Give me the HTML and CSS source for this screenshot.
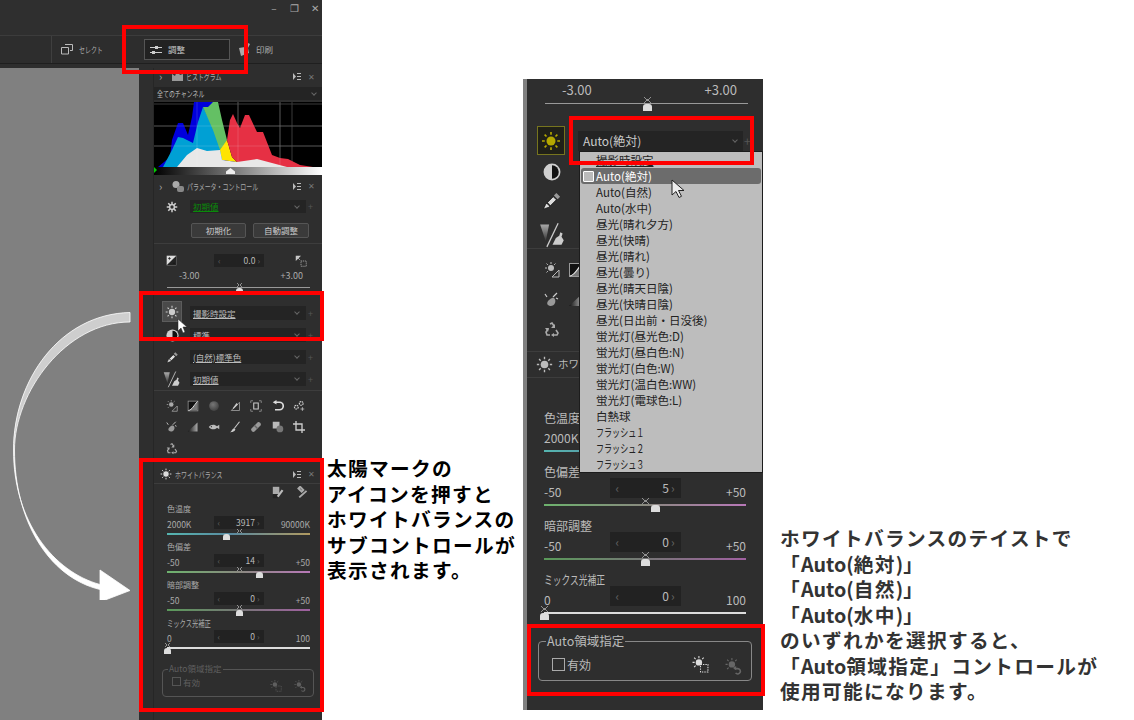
FILE: index.html
```html
<!DOCTYPE html>
<html lang="ja">
<head>
  <meta charset="UTF-8" />
  <title>ホワイトバランス</title>
  <link rel="stylesheet" href="styles.css">
</head>
<body>
<svg class="defs" aria-hidden="true">
  <symbol id="i-sun" viewBox="0 0 16 16"><circle cx="8" cy="8" r="3.6" fill="currentColor"/><path d="M8 .8v2.2M8 13v2.2M.8 8H3M13 8h2.2M2.9 2.9l1.5 1.5M11.6 11.6l1.5 1.5M2.9 13.1l1.5-1.5M11.6 4.4l1.5-1.5" stroke="currentColor" stroke-width="1.3" fill="none"/></symbol>
  <symbol id="i-half" viewBox="0 0 16 16"><circle cx="8" cy="8" r="7.500" fill="#cfcfcf"/><path d="M8 2a6 6 0 0 1 0 12z" fill="#111"/></symbol>
  <symbol id="i-pen" viewBox="0 0 16 16"><path d="M1 14.500l2-4 6-6 2.500 2.500-6 6z" fill="#ddd" stroke="#111" stroke-width=".6"/><path d="M9.500 3.500l2-2 3 3-2 2z" fill="#999"/><path d="M4 9.500l2.500 2.500" stroke="#222" stroke-width="1.200"/></symbol>
  <symbol id="i-tone" viewBox="0 0 24 24"><defs><linearGradient id="g-tone" x1="0" y1="0" x2="0" y2="1"><stop offset="0" stop-color="#aaa"/><stop offset="1" stop-color="#333"/></linearGradient></defs><path d="M1 3h8l-3 15z" fill="url(#g-tone)"/><path d="M7 23L17 2" stroke="#ccc" stroke-width="1.100"/><path d="M12 21l3-6 3-2 1-3 2 1-1 3 2 3-2 4z" fill="#ccc"/></symbol>
  <symbol id="i-gear" viewBox="0 0 16 16"><circle cx="8" cy="8" r="3.200" fill="none" stroke="currentColor" stroke-width="2"/><path d="M8 1v3M8 12v3M1 8h3M12 8h3M3 3l2.200 2.200M10.800 10.800L13 13M3 13l2.200-2.200M10.800 5.200L13 3" stroke="currentColor" stroke-width="2"/></symbol>
  <symbol id="i-exp" viewBox="0 0 16 16"><rect x="1" y="1" width="14" height="14" fill="#ddd"/><path d="M15 1L1 15h14z" fill="#222"/><path d="M3 5h4M5 3v4M10 12h3" stroke="#111" stroke-width="1"/></symbol>
  <symbol id="i-auto" viewBox="0 0 16 16"><path d="M1 1h7L1 8z" fill="#ccc"/><rect x="8" y="8" width="7" height="7" fill="none" stroke="#bbb" stroke-dasharray="1.500 1"/><path d="M2 2l5 5" stroke="#bbb"/></symbol>
  <symbol id="i-sunbox" viewBox="0 0 16 16"><circle cx="7" cy="6" r="3" fill="currentColor"/><path d="M7 0v2M1 6h2M2.500 1.500l1.400 1.400M2.500 10.500l1.400-1.400M11.500 1.500l-1.400 1.400" stroke="currentColor"/><path d="M15 8v7H8z" fill="none" stroke="currentColor"/></symbol>
  <symbol id="i-curve" viewBox="0 0 16 16"><rect x="1.500" y="1.500" width="13" height="13" fill="#111" stroke="#999"/><path d="M2 14C7 13 9 7 14 2v12z" fill="#777"/><path d="M2 14C7 13 9 7 14 2" fill="none" stroke="#eee" stroke-width="1.200"/></symbol>
  <symbol id="i-ball" viewBox="0 0 16 16"><defs><radialGradient id="g-ball" cx=".4" cy=".35" r=".7"><stop offset="0" stop-color="#777"/><stop offset="1" stop-color="#3f3f3f"/></radialGradient></defs><circle cx="8" cy="8" r="6.500" fill="url(#g-ball)"/></symbol>
  <symbol id="i-dtri" viewBox="0 0 16 16"><path d="M14 14H3L14 3z" fill="none" stroke="#aaa"/><path d="M5 11l5-7 2 2-6 6z" fill="#ccc"/></symbol>
  <symbol id="i-brk" viewBox="0 0 16 16"><path d="M1 4V1h3M12 1h3v3M15 12v3h-3M4 15H1v-3" stroke="#999" fill="none"/><path d="M5 4h6v8H5z" fill="none" stroke="#ccc" stroke-width="1.400"/></symbol>
  <symbol id="i-undo" viewBox="0 0 16 16"><path d="M5 3h5a4.500 4.500 0 0 1 0 10H4" fill="none" stroke="#ddd" stroke-width="2.200"/><path d="M6 0v6L1 3z" fill="#ddd"/></symbol>
  <symbol id="i-gears" viewBox="0 0 16 16"><circle cx="11" cy="4.500" r="2.500" fill="none" stroke="#ccc" stroke-width="1.600" stroke-dasharray="2 .8"/><circle cx="4.500" cy="9.500" r="2.500" fill="none" stroke="#ccc" stroke-width="1.600" stroke-dasharray="2 .8"/><path d="M10 12h5M12.500 9.500v5" stroke="#ccc"/></symbol>
  <symbol id="i-pear" viewBox="0 0 16 16"><path d="M8 6c3-1 4 3 3 5-1 3-5 4-7 2-2-2 0-5 4-7z" fill="#999"/><path d="M9 5l4-4M1 2l2 3M14 7l-2-1" stroke="#ccc" stroke-width="1.200"/></symbol>
  <symbol id="i-grad" viewBox="0 0 16 16"><defs><linearGradient id="g-grad"><stop offset="0" stop-color="#111"/><stop offset="1" stop-color="#aaa"/></linearGradient></defs><path d="M1 14L14 2v12z" fill="url(#g-grad)"/></symbol>
  <symbol id="i-fish" viewBox="0 0 16 16"><path d="M1 8c3-4 8-4 11-1l3-2v6l-3-2C9 12 4 12 1 8z" fill="#bbb"/><circle cx="4.500" cy="7.500" r=".8" fill="#222"/></symbol>
  <symbol id="i-brush" viewBox="0 0 16 16"><path d="M14 1L7 10" stroke="#ccc" stroke-width="1.400"/><path d="M6.500 9.500l2 1.500C8 14 4 15 1.500 15c2-1 2-4 5-5.500z" fill="#ccc"/></symbol>
  <symbol id="i-band" viewBox="0 0 16 16"><path d="M2 10l8-8c2-2 6 2 4 4l-8 8c-2 2-6-2-4-4z" fill="#999"/><path d="M6 6l4 4" stroke="#666" stroke-width="2"/></symbol>
  <symbol id="i-chips" viewBox="0 0 16 16"><rect x="1" y="1" width="9" height="9" fill="#bbb"/><circle cx="10.500" cy="10.500" r="4.500" fill="#777"/></symbol>
  <symbol id="i-crop" viewBox="0 0 16 16"><path d="M4 0v12h12M0 4h12v12" fill="none" stroke="#ccc" stroke-width="1.800"/></symbol>
  <symbol id="i-cycle" viewBox="0 0 16 16"><path d="M6 2l2-1 2 3-1 1M4 7L2 10l1 3h3M12 8l2 3-1 2h-3" fill="none" stroke="#aaa" stroke-width="1.600"/><path d="M11 2v4H7zM1 6l4 0-1 4zM10 11v4l-3-2z" fill="#aaa"/></symbol>
  <symbol id="i-drop1" viewBox="0 0 16 16"><rect x="1" y="1" width="8" height="9" fill="#aaa"/><rect x="1" y="10" width="6" height="5" fill="#222"/><path d="M7 13l6-8" stroke="#bbb" stroke-width="2.600"/></symbol>
  <symbol id="i-drop2" viewBox="0 0 16 16"><path d="M5 1l4 4-2 2-4-4zM4 14l9-8" stroke="#aaa" stroke-width="2.400" fill="none"/></symbol>
  <symbol id="i-area" viewBox="0 0 16 16"><circle cx="6.500" cy="6" r="3" fill="currentColor"/><path d="M6.500 0v2M.5 6h2M2 1.500l1.400 1.400M2 10.500l1.400-1.400M11 1.500l-1.400 1.400" stroke="currentColor"/><rect x="8" y="8" width="7" height="7" fill="none" stroke="currentColor" stroke-dasharray="1.300 1"/></symbol>
  <symbol id="i-areaback" viewBox="0 0 16 16"><circle cx="6.500" cy="6" r="3" fill="currentColor"/><path d="M6.500 0v2M.5 6h2M2 1.500l1.400 1.400M2 10.500l1.400-1.400M11 1.500l-1.400 1.400" stroke="currentColor"/><path d="M9 10h3a2.500 2.500 0 1 1-2 4" fill="none" stroke="currentColor" stroke-width="1.500"/><path d="M10.500 7.500v4L7.500 9.500z" fill="currentColor"/></symbol>
  <symbol id="i-menu" viewBox="0 0 8 7"><path d="M0 0v7l3-3.500z" fill="currentColor"/><path d="M4 .5h4M4 3.500h4M4 6.500h4" stroke="currentColor"/></symbol>
</svg>

<div class="slide">

  <!-- left screenshot -->
  <section class="shot-left">
    <div class="win-bar">
      <span class="win-btn">–</span>
      <span class="win-btn">❐</span>
      <span class="win-btn">✕</span>
    </div>
    <div class="tool-bar">
      <div class="tool-first"></div>
      <div class="tool-item select-item">
        <svg width="12" height="11" viewBox="0 0 12 11"><path d="M4 .5h7.500v6H9M.5 3.500h7v6.500h-7z" fill="none" stroke="#bbb"/></svg>
        <span class="tight">セレクト</span>
      </div>
      <div class="tool-item active-item">
        <svg width="12" height="8" viewBox="0 0 12 8"><path d="M0 1.500h5M8 1.500h4M0 6.500h2M5 6.500h7" stroke="#ccc"/><rect x="5" y="0" width="3" height="3" fill="#ccc"/><rect x="2" y="5" width="3" height="3" fill="#ccc"/></svg>
        <span>調整</span>
      </div>
      <div class="tool-item print-item">
        <svg width="11" height="13" viewBox="0 0 11 13"><path d="M0 5l6-1 3-4 2 1-2 4 1 5-8 3z" fill="#aaa"/></svg>
        <span>印刷</span>
      </div>
    </div>
    <div class="work">
      <div class="canvas"></div>
      <div class="sidebar">
        <div class="side-body">

          <div class="head">
            <span class="chev">›</span>
            <svg class="head-icon" width="11" height="11" viewBox="0 0 11 11"><path d="M0 10V3l3 2 2-5 3 4 3-1v7z" fill="#999"/></svg>
            <span class="head-title tight">ヒストグラム</span>
            <svg class="head-menu" width="8" height="7"><use href="#i-menu"/></svg>
            <span class="head-close">✕</span>
          </div>
          <div class="channel"><span class="tight">全てのチャンネル</span><i class="drop-arrow"></i></div>

          <svg class="hist" width="168" height="65" viewBox="154 102 168 65">
            <rect x="154" y="102" width="168" height="65" fill="#000"/>
            <path d="M154 104h168M154 126h168M154 146h168M197 102v65M238 102v65M280 102v65M292 102v65" stroke="#3a3a3a"/>
            <path d="M158 167L170 157L172 140L178 123L183 123L188 135L192 117L194 102H213L225 150V167Z" fill="#0000dc"/>
            <path d="M163 167L172 150L178 137L183 138L193 143L198 122L203 107L213 127L222 148L225 167Z" fill="#00a0d4"/>
            <path d="M203 107L208 107L213 102L218 102L222 120L227 140L223 150L220 150L213 130Z" fill="#64c064"/>
            <path d="M220 150L227 140L232 157L237 162L222 160Z" fill="#ffe400"/>
            <path d="M227 140L230 120L233 114L237 123L240 128L245 115L249 115L257 132L263 132L272 155L280 158L288 159L300 165L313 167H233L237 162L232 157Z" fill="#e63044"/>
            <path d="M177 167L187 155L197 148L207 151L220 150L222 160L237 162L257 159L272 163L287 167Z" fill="#e8e8e8"/>
            <path d="M154 126h168M154 146h168M197 102v65M238 102v65M280 102v65" stroke="#fff" stroke-opacity=".14"/>
          </svg>
          <div class="hist-bar">
            <span class="hist-black"></span>
            <span class="hist-mid"></span>
          </div>

          <div class="head head-param">
            <span class="chev">›</span>
            <svg class="head-icon" width="12" height="11" viewBox="0 0 12 11"><circle cx="4" cy="3.500" r="3.500" fill="#aaa"/><rect x="5" y="5" width="7" height="6" rx="2" fill="#888"/></svg>
            <span class="head-title tight">パラメータ・コントロール</span>
            <svg class="head-menu" width="8" height="7"><use href="#i-menu"/></svg>
            <span class="head-close">✕</span>
          </div>

          <div class="ctl-row gear-row">
            <span class="ctl-icon"><svg width="12" height="12"><use href="#i-gear"/></svg></span>
            <div class="drop"><span class="green">初期値</span><i class="drop-arrow"></i></div>
            <span class="plus">+</span>
          </div>

          <div class="btn-row">
            <button class="btn">初期化</button>
            <button class="btn">自動調整</button>
          </div>
          <div class="rule rule-btn"></div>

          <div class="exp-row">
            <svg width="11" height="11"><use href="#i-exp"/></svg>
            <span class="num"><i>‹</i><b>0.0</b><i>›</i></span>
            <svg width="12" height="12"><use href="#i-auto"/></svg>
          </div>
          <div class="exp-labels"><span>-3.00</span><span>+3.00</span></div>
          <div class="track exp-track"><span class="mark-x"></span><span class="thumb" style="left:50%"></span></div>

          <div class="ctl-row sun-row">
            <span class="ctl-icon"><span class="sun-btn"><svg width="14" height="14"><use href="#i-sun"/></svg></span></span>
            <div class="drop"><span class="ul">撮影時設定</span><i class="drop-arrow"></i></div>
            <span class="plus">+</span>
          </div>
          <div class="ctl-row">
            <span class="ctl-icon"><svg width="13" height="13"><use href="#i-half"/></svg></span>
            <div class="drop"><span class="ul">標準</span><i class="drop-arrow"></i></div>
            <span class="plus">+</span>
          </div>
          <div class="ctl-row">
            <span class="ctl-icon"><svg width="13" height="13"><use href="#i-pen"/></svg></span>
            <div class="drop"><span class="ul">(自然)標準色</span><i class="drop-arrow"></i></div>
            <span class="plus">+</span>
          </div>
          <div class="ctl-row">
            <span class="ctl-icon"><svg width="18" height="18"><use href="#i-tone"/></svg></span>
            <div class="drop"><span class="ul">初期値</span><i class="drop-arrow"></i></div>
            <span class="plus">+</span>
          </div>
          <div class="rule rule-icons"></div>

          <div class="icon-grid">
            <svg><use href="#i-sunbox"/></svg>
            <svg><use href="#i-curve"/></svg>
            <svg><use href="#i-ball"/></svg>
            <svg><use href="#i-dtri"/></svg>
            <svg><use href="#i-brk"/></svg>
            <svg><use href="#i-undo"/></svg>
            <svg><use href="#i-gears"/></svg>
            <svg><use href="#i-pear"/></svg>
            <svg><use href="#i-grad"/></svg>
            <svg><use href="#i-fish"/></svg>
            <svg><use href="#i-brush"/></svg>
            <svg><use href="#i-band"/></svg>
            <svg><use href="#i-chips"/></svg>
            <svg><use href="#i-crop"/></svg>
            <svg><use href="#i-cycle"/></svg>
          </div>

          <div class="head head-wb">
            <svg class="head-sun" width="12" height="12"><use href="#i-sun"/></svg>
            <span class="head-title tight">ホワイトバランス</span>
            <svg class="head-menu" width="8" height="7"><use href="#i-menu"/></svg>
            <span class="head-close">✕</span>
          </div>
          <div class="wb-tools">
            <svg width="13" height="13"><use href="#i-drop1"/></svg>
            <svg width="13" height="13"><use href="#i-drop2"/></svg>
          </div>

          <div class="sliders small">
            <div class="slider">
              <div class="slider-name">色温度</div>
              <div class="slider-row"><span>2000K</span><span class="num"><i>‹</i><b>3917</b><i>›</i></span><span class="end">90000K</span></div>
              <div class="track temp"><span class="mark-x"></span><span class="thumb" style="left:41%"></span></div>
            </div>
            <div class="slider">
              <div class="slider-name">色偏差</div>
              <div class="slider-row"><span>-50</span><span class="num"><i>‹</i><b>14</b><i>›</i></span><span class="end">+50</span></div>
              <div class="track tint"><span class="mark-x"></span><span class="thumb" style="left:64%"></span></div>
            </div>
            <div class="slider">
              <div class="slider-name">暗部調整</div>
              <div class="slider-row"><span>-50</span><span class="num"><i>‹</i><b>0</b><i>›</i></span><span class="end">+50</span></div>
              <div class="track dark"><span class="mark-x"></span><span class="thumb" style="left:50%"></span></div>
            </div>
            <div class="slider">
              <div class="slider-name tight">ミックス光補正</div>
              <div class="slider-row"><span>0</span><span class="num"><i>‹</i><b>0</b><i>›</i></span><span class="end">100</span></div>
              <div class="track mix"><span class="mark-x mark-start"></span><span class="thumb" style="left:0"></span></div>
            </div>
          </div>

          <div class="area-group small-area">
            <span class="area-legend">Auto領域指定</span>
            <span class="check"></span>
            <span class="check-text">有効</span>
            <svg class="area-a" width="12" height="12"><use href="#i-area"/></svg>
            <svg class="area-b" width="12" height="12"><use href="#i-areaback"/></svg>
          </div>

        </div>
      </div>
    </div>

    <svg class="swoosh" width="140" height="300" viewBox="0 300 140 300">
      <defs>
        <linearGradient id="g-swoosh" x1="0" y1="0" x2="0" y2="1">
          <stop offset="0" stop-color="#cecece"/>
          <stop offset=".47" stop-color="#cecece"/>
          <stop offset=".55" stop-color="#fff"/>
        </linearGradient>
      </defs>
      <path d="M130 312.500C60 314 13.500 380 13.500 450C13.500 522 54 572 100 584.500L100 570L130 590.500L100 602L100 589.500C48 577 14.500 520 14.500 450C14.500 392 66 322 130 322Z" fill="url(#g-swoosh)" stroke="#fff" stroke-width=".8"/>
    </svg>
    <svg class="cursor-a" width="10" height="15" viewBox="0 0 10 15"><path d="M1 0v12l3-3 2 5 2-1-2-5h4z" fill="#fff" stroke="#222" stroke-width=".5"/></svg>
  </section>

  <p class="note note-left">太陽マークの<br>アイコンを押すと<br>ホワイトバランスの<br>サブコントロールが<br>表示されます。</p>

  <!-- right screenshot -->
  <section class="shot-right">
    <div class="exp-labels big-labels"><span>-3.00</span><span>+3.00</span></div>
    <div class="track big-track"><span class="mark-x"></span><span class="thumb" style="left:50%"></span></div>

    <div class="big-sun-row">
      <span class="big-sun"><svg width="20" height="20"><use href="#i-sun"/></svg></span>
      <div class="drop big-drop"><span>Auto(絶対)</span><i class="drop-arrow"></i></div>
      <span class="plus">+</span>
    </div>

    <span class="big-icon half-icon"><svg width="18" height="18"><use href="#i-half"/></svg></span>
    <span class="big-icon pen-icon"><svg width="20" height="20"><use href="#i-pen"/></svg></span>
    <span class="big-icon tone-icon"><svg width="27" height="27"><use href="#i-tone"/></svg></span>
    <div class="rule"></div>

    <div class="big-grid">
      <svg><use href="#i-sunbox"/></svg>
      <svg><use href="#i-curve"/></svg>
      <svg><use href="#i-pear"/></svg>
      <svg><use href="#i-grad"/></svg>
      <svg><use href="#i-cycle"/></svg>
    </div>
    <div class="rule big-grid-end"></div>

    <div class="big-head">
      <svg width="17" height="17"><use href="#i-sun"/></svg>
      <span>ホワ</span>
    </div>

    <div class="sliders big">
      <div class="slider">
        <div class="slider-name">色温度</div>
        <div class="slider-row"><span>2000K</span></div>
        <div class="track temp"></div>
      </div>
      <div class="slider">
        <div class="slider-name">色偏差</div>
        <div class="slider-row"><span>-50</span><span class="num"><i>‹</i><b>5</b><i>›</i></span><span class="end">+50</span></div>
        <div class="track tint"><span class="mark-x"></span><span class="thumb" style="left:55%"></span></div>
      </div>
      <div class="slider">
        <div class="slider-name">暗部調整</div>
        <div class="slider-row"><span>-50</span><span class="num"><i>‹</i><b>0</b><i>›</i></span><span class="end">+50</span></div>
        <div class="track dark"><span class="mark-x"></span><span class="thumb" style="left:50%"></span></div>
      </div>
      <div class="slider">
        <div class="slider-name tight">ミックス光補正</div>
        <div class="slider-row"><span>0</span><span class="num"><i>‹</i><b>0</b><i>›</i></span><span class="end">100</span></div>
        <div class="track mix"><span class="mark-x mark-start"></span><span class="thumb" style="left:0"></span></div>
      </div>
    </div>

    <div class="area-group big-area">
      <span class="area-legend">Auto領域指定</span>
      <span class="check"></span>
      <span class="check-text">有効</span>
      <svg class="area-a" width="17" height="17"><use href="#i-area"/></svg>
      <svg class="area-b" width="17" height="17"><use href="#i-areaback"/></svg>
    </div>

    <ul class="popup">
      <li class="ul">撮影時設定</li>
      <li class="sel">Auto(絶対)</li>
      <li>Auto(自然)</li>
      <li>Auto(水中)</li>
      <li>昼光(晴れ夕方)</li>
      <li>昼光(快晴)</li>
      <li>昼光(晴れ)</li>
      <li>昼光(曇り)</li>
      <li>昼光(晴天日陰)</li>
      <li>昼光(快晴日陰)</li>
      <li>昼光(日出前・日没後)</li>
      <li>蛍光灯(昼光色:D)</li>
      <li>蛍光灯(昼白色:N)</li>
      <li>蛍光灯(白色:W)</li>
      <li>蛍光灯(温白色:WW)</li>
      <li>蛍光灯(電球色:L)</li>
      <li>白熱球</li>
      <li><span class="tight">フラッシュ１</span></li>
      <li><span class="tight">フラッシュ２</span></li>
      <li><span class="tight">フラッシュ３</span></li>
    </ul>
    <svg class="cursor-b" width="14" height="20" viewBox="0 0 14 20"><path d="M1 1v15l4-3.500 3 6 2.500-1.200-3-5.800H13z" fill="#eee" stroke="#222"/></svg>
  </section>

  <p class="note note-right">ホワイトバランスのテイストで<br>「<span class="latin">Auto(</span>絶対<span class="latin">)</span>」<br>「<span class="latin">Auto(</span>自然<span class="latin">)</span>」<br>「<span class="latin">Auto(</span>水中<span class="latin">)</span>」<br>のいずれかを選択すると、<br>「<span class="latin">Auto</span>領域指定」コントロールが<br>使用可能になります。</p>

  <!-- red call-outs -->
  <div class="frame frame-tool"></div>
  <div class="frame frame-sun"></div>
  <div class="frame frame-wb"></div>
  <div class="frame frame-drop"></div>
  <div class="frame frame-area"></div>
</div>
</body>
</html>
```

FILE: styles.css
```css
* {
  box-sizing: border-box;
}

body {
  margin: 0;
  background: #fff;
  font-family: "Noto Sans CJK JP", "Noto Sans", sans-serif;
}

.defs {
  width: 0;
  height: 0;
  position: absolute;
}

.slide {
  position: relative;
  width: 1134px;
  height: 720px;
  overflow: hidden;
}

/* the app's kana is much narrower than Noto's */
.tight {
  display: block;
  width: max-content;
  transform: scaleX(.7);
  transform-origin: left center;
}

/* left screenshot */
.shot-left {
  position: absolute;
  left: 0;
  top: 0;
  width: 322px;
  height: 720px;
  background: #2e2e2e;
  color: #aaa;
  font-size: 8.500px;
  line-height: 1;
}

.win-bar {
  height: 35px;
  display: flex;
  justify-content: flex-end;
  padding-top: 3px;
  gap: 6.500px;
  background: #2f2f2f;
}

.win-btn {
  width: 14px;
  font-size: 10px;
  text-align: center;
  color: #aaa;
}

.tool-bar {
  height: 29px;
  display: flex;
  align-items: center;
  background: #2d2d2d;
  border-top: 1px solid #3c3c3c;
  border-bottom: 1px solid #1f1f1f;
}

.tool-first {
  width: 52px;
  height: 100%;
  border-right: 1px solid #3f3f3f;
}

.tool-item {
  display: flex;
  align-items: center;
  color: #aaa;
}

.select-item {
  margin-left: 9px;
  gap: 6px;
  width: 83px;
}

.active-item {
  width: 86px;
  height: 21px;
  gap: 6px;
  padding-left: 5px;
  background: #222;
  border: 1px solid #555;
  color: #ccc;
}

.print-item {
  margin-left: 9px;
  gap: 6px;
}

.work {
  display: flex;
  height: 656px;
  padding-top: 4px;
}

.canvas {
  width: 139px;
  background: #808080;
}

.sidebar {
  width: 183px;
  padding-left: 14px;
}

.side-body {
  height: 100%;
  border-left: 1px solid #262626;
}

.head {
  height: 17px;
  display: flex;
  align-items: center;
  padding-right: 4px;
  color: #aaa;
}

.chev {
  width: 18px;
  padding-left: 5px;
  font-size: 11px;
}

.head-title {
  margin-left: 3px;
}

.head-menu {
  margin-left: auto;
  color: #bbb;
}

.head-close {
  width: 14px;
  margin-left: 3px;
  font-size: 8px;
  text-align: center;
  color: #777;
}

.channel {
  height: 13px;
  margin-top: 2px;
  display: flex;
  align-items: center;
  padding: 0 6px 0 3px;
  background: #242424;
  color: #bbb;
}

.drop-arrow {
  margin-left: auto;
  width: 4px;
  height: 4px;
  border-right: 1px solid #666;
  border-bottom: 1px solid #666;
  transform: rotate(45deg);
  margin-top: -2px;
}

.hist {
  display: block;
  margin-top: 2px;
}

.hist-bar {
  position: relative;
  height: 8px;
  background: linear-gradient(90deg, #000, #fff);
}

.hist-black {
  position: absolute;
  left: 0;
  top: 0;
  border-left: 3px solid #0c0;
  border-top: 3px solid transparent;
  border-bottom: 3px solid transparent;
}

.hist-mid {
  position: absolute;
  left: 72px;
  top: 1px;
  width: 9px;
  height: 6px;
  background: #eee;
  clip-path: polygon(50% 0, 100% 60%, 100% 100%, 0 100%, 0 60%);
}

.head-param {
  height: 16px;
  margin-top: 3px;
}

.ctl-row {
  height: 14px;
  margin-top: 8px;
  display: flex;
  align-items: center;
}

.ctl-icon {
  width: 36px;
  display: flex;
  justify-content: center;
  color: #ccc;
}

.drop {
  width: 116px;
  height: 100%;
  display: flex;
  align-items: center;
  padding: 0 7px 0 3px;
  background: #242424;
  color: #bbb;
}

.green {
  color: #0a8a0a;
  text-decoration: underline;
}

.ul {
  text-decoration: underline;
}

.plus {
  margin-left: 2px;
  color: #555;
  font-size: 9px;
}

.gear-row {
  height: 13px;
  margin-top: 6px;
}

.btn-row {
  margin: 10px 0 0 37px;
  display: flex;
  gap: 7px;
}

.btn {
  width: 55px;
  height: 15px;
  padding: 0;
  font: inherit;
  color: #ccc;
  background: #3a3a3a;
  border: 1px solid #555;
  border-radius: 2px;
}

.btn + .btn {
  width: 56px;
}

.rule {
  height: 1px;
  background: #3d3d3d;
}

.rule-btn {
  margin-top: 5px;
}

.exp-row {
  margin-top: 10px;
  height: 13px;
  display: flex;
  align-items: center;
  padding-left: 12px;
}

.exp-row .num {
  width: 50px;
  margin-left: 37px;
  margin-right: 31px;
}

.num {
  height: 13px;
  display: flex;
  align-items: center;
  padding: 0 4px;
  background: #222;
  color: #bbb;
}

.num i {
  font-style: normal;
  color: #666;
}

.num b {
  margin-left: auto;
  margin-right: 2px;
  font-weight: normal;
}

.exp-labels {
  width: 124px;
  height: 11px;
  margin: 4px 0 0 25px;
  display: flex;
  justify-content: space-between;
  font-size: 9px;
}

.track {
  position: relative;
  height: 1px;
  background: #999;
}

.exp-track {
  width: 143px;
  margin: 5px 0 0 13px;
}

/* small x above the track: the neutral position */
.mark-x {
  position: absolute;
  left: 50%;
  top: -4px;
  width: 5px;
  height: 4px;
  margin-left: -2px;
  opacity: .8;
  background:
    linear-gradient(38deg, transparent 45%, #aaa 45% 55%, transparent 55%),
    linear-gradient(-38deg, transparent 45%, #aaa 45% 55%, transparent 55%);
}

.mark-start {
  left: 0;
}

.thumb {
  position: absolute;
  top: 1px;
  width: 7px;
  height: 6px;
  margin-left: -3px;
  background: #ddd;
  border-radius: 3px 3px 0 0;
}

.sun-row {
  margin-top: 18px;
}

.sun-btn {
  width: 20px;
  height: 21px;
  margin-top: -3px;
  display: flex;
  align-items: center;
  justify-content: center;
  background: #4a4a4a;
  border: 1px solid #5c5c5c;
}

.rule-icons {
  margin-top: 4px;
}

.icon-grid {
  margin: 4px 0 0 7px;
  display: grid;
  grid-template-columns: repeat(7, 21.200px);
  grid-auto-rows: 21.500px;
  place-items: center;
}

.icon-grid svg {
  width: 12px;
  height: 12px;
}

.head-wb {
  margin-top: 6px;
  height: 18px;
  border-bottom: 1px solid #3d3d3d;
  padding-left: 6px;
}

.head-sun {
  color: #ddd;
}

.wb-tools {
  height: 12px;
  margin: 3px 0 0;
  padding-right: 13px;
  display: flex;
  justify-content: flex-end;
  align-items: center;
  gap: 11px;
}

.small {
  width: 143px;
  margin: 6px 0 0 13px;
}

.slider-row {
  display: grid;
  grid-template-columns: 1fr 50px 1fr;
}

.slider-row > span:not(.num) {
  padding-top: 4px;
}

.end {
  text-align: right;
}

.slider-name {
  height: 11px;
  font-size: 8px;
}

.small .slider-name.tight {
  font-size: 9px;
}

.small .slider {
  height: 38px;
}

.small .track {
  margin-top: 4px;
}

.temp {
  height: 2px;
  background: linear-gradient(90deg, #55b5b0, #5a8aa0 45%, #b09a60);
}

.tint {
  height: 2px;
  background: linear-gradient(90deg, #6db26d, #8a8a80 50%, #b878b8);
}

.dark {
  height: 2px;
  background: linear-gradient(90deg, #5a9a5a, #777 50%, #a060a0);
}

.mix {
  height: 2px;
  background: #ddd;
}

.area-group {
  position: relative;
  border: 1px solid #555;
  border-radius: 4px;
}

.small-area {
  width: 152px;
  height: 28px;
  margin: 12px 0 0 8px;
  color: #5f5f5f;
}

.area-legend {
  position: absolute;
  left: 5px;
  top: -6px;
  padding: 0 1px;
  background: #2e2e2e;
}

.check {
  position: absolute;
  left: 9px;
  top: 7px;
  width: 9px;
  height: 9px;
  border: 1px solid #555;
}

.check-text {
  position: absolute;
  left: 20px;
  top: 8px;
}

.area-a {
  position: absolute;
  left: 107px;
  top: 10px;
}

.area-b {
  position: absolute;
  left: 131px;
  top: 10px;
}

.swoosh {
  position: absolute;
  left: 0;
  top: 300px;
}

.cursor-a {
  position: absolute;
  left: 177px;
  top: 319px;
}

/* right screenshot */
.shot-right {
  position: absolute;
  left: 523px;
  top: 79px;
  width: 240px;
  height: 631px;
  background: #2e2e2e;
  border-left: 4px solid #808080;
  color: #bbb;
  font-size: 12px;
  line-height: 1;
}

.big-labels {
  width: 175px;
  height: 14px;
  margin: 4px 0 0 35px;
  font-size: 13px;
}

.big-track {
  width: 203px;
  margin: 6px 0 0 18px;
}

.big-track .mark-x,
.big .mark-x {
  width: 7px;
  height: 6px;
  margin-left: -3px;
  top: -6px;
}

.big .thumb,
.big-track .thumb {
  width: 9px;
  height: 7px;
  margin-left: -4px;
}

.big-sun-row {
  height: 29px;
  margin: 22px 0 0 10px;
  display: flex;
  align-items: center;
}

.big-sun {
  width: 28px;
  height: 29px;
  display: flex;
  align-items: center;
  justify-content: center;
  background: #202018;
  border: 1px solid #77751e;
  color: #b5a800;
}

.big-drop {
  width: 165px;
  height: 20px;
  margin: 0 0 0 13px;
  padding: 0 6px 0 5px;
  background: #242424;
  font-size: 12px;
  color: #ccc;
}

.big-sun-row .plus {
  margin-left: 1px;
  font-size: 12px;
}

.big-icon {
  display: flex;
  width: 50px;
  justify-content: center;
}

.half-icon {
  margin-top: 8px;
}

.pen-icon {
  margin-top: 10px;
}

.tone-icon {
  margin-top: 10px;
}

.big-grid {
  margin: 6px 0 0 12px;
  display: grid;
  grid-template-columns: 26px 22px;
  grid-auto-rows: 30px;
  place-items: center;
}

.big-grid svg {
  width: 16px;
  height: 16px;
}

.big-grid-end {
  margin-top: 6px;
}

.big-head {
  height: 26px;
  display: flex;
  align-items: center;
  gap: 5px;
  padding-left: 9px;
  font-size: 10.500px;
  border-bottom: 1px solid #3d3d3d;
}

.big {
  width: 202px;
  margin: 32px 0 0 17px;
}

.big .slider {
  height: 54px;
}

.big .slider-name {
  height: 14px;
  padding-top: 2px;
  font-size: 12px;
}

.big .slider-name.tight {
  font-size: 12.500px;
}

.big .slider-row {
  grid-template-columns: 1fr 71px 1fr;
  height: 20px;
}

.big .num {
  height: 20px;
  padding: 0 6px;
  background: #222;
}

.big .slider-row > span:not(.num) {
  padding-top: 8px;
}

.big .track {
  margin-top: 6px;
}

.big-area {
  width: 214px;
  height: 40px;
  margin: 15px 0 0 11px;
  border-color: #888;
  color: #bbb;
  font-size: 12px;
}

.big-area .area-legend {
  left: 7px;
  top: -7px;
  font-size: 12.500px;
}

.big-area .check {
  left: 13px;
  top: 16px;
  width: 13px;
  height: 13px;
  border-color: #aaa;
}

.big-area .check-text {
  left: 28px;
  top: 17px;
}

.big-area .area-a {
  left: 153px;
  top: 14px;
  color: #ddd;
}

.big-area .area-b {
  left: 186px;
  top: 16px;
  color: #666;
}

.popup {
  position: absolute;
  left: 52px;
  top: 72px;
  width: 184px;
  height: 322px;
  margin: 0;
  padding: 0 1px;
  list-style: none;
  background: #bdbdbd;
  border: 1px solid #1c1c1c;
  color: #222;
  font-size: 11.500px;
}

.popup li {
  height: 16px;
  padding-left: 15px;
  line-height: 16px;
  white-space: nowrap;
}

.popup .sel {
  position: relative;
  background: #6c6c6c;
  border-radius: 3px;
  color: #fff;
}

.popup .sel::before {
  content: "";
  position: absolute;
  left: 2px;
  top: 3px;
  width: 9px;
  height: 9px;
  background: #bbb;
  border: 1px solid #fff;
  border-radius: 1px;
}

.cursor-b {
  position: absolute;
  left: 144px;
  top: 100px;
}

/* notes */
.note {
  position: absolute;
  margin: 0;
  font-size: 19.700px;
  letter-spacing: 1.300px;
  font-weight: 700;
  line-height: 25.500px;
  white-space: nowrap;
}

.latin {
  letter-spacing: 0;
}

.note-left {
  left: 327px;
  top: 455px;
  color: #000;
}

.note-right {
  left: 780px;
  top: 525px;
  color: #333;
}

/* red call-outs */
.frame {
  position: absolute;
  border: 4px solid #f00;
}

.frame-tool {
  left: 122px;
  top: 25px;
  width: 126px;
  height: 49px;
}

.frame-sun {
  left: 139px;
  top: 291px;
  width: 185px;
  height: 50px;
}

.frame-wb {
  left: 139px;
  top: 458px;
  width: 185px;
  height: 254px;
}

.frame-drop {
  left: 569px;
  top: 116px;
  width: 185px;
  height: 49px;
}

.frame-area {
  left: 527px;
  top: 624px;
  width: 238px;
  height: 72px;
}
```
